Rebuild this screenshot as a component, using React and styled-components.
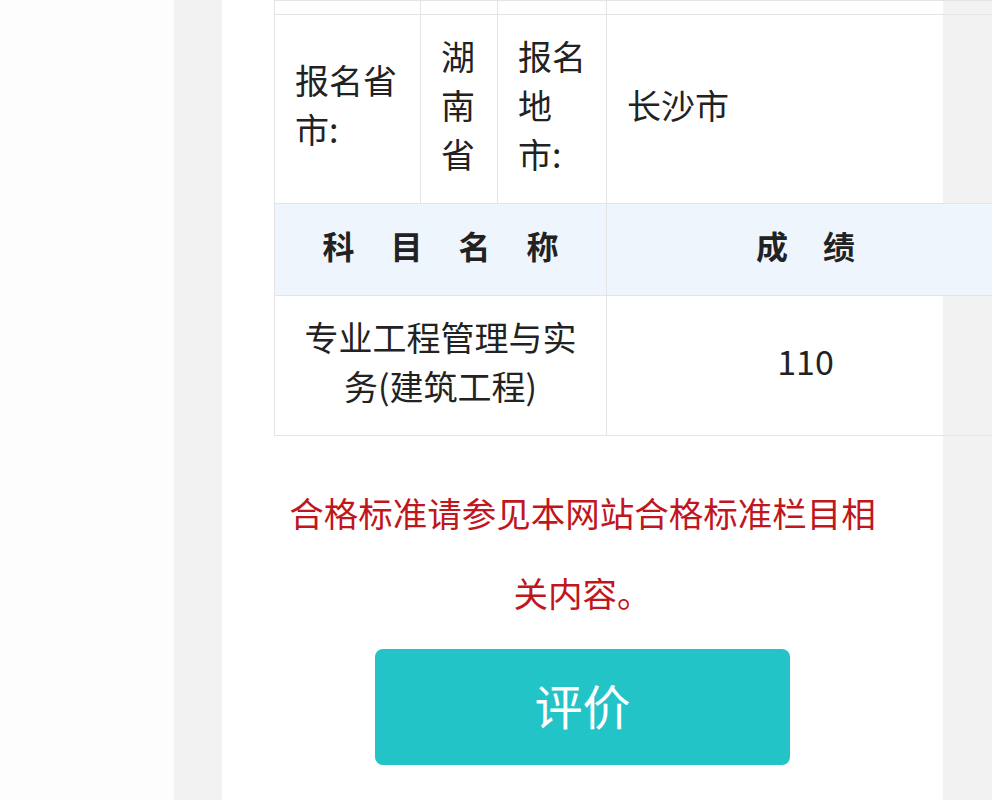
import styled, { createGlobalStyle } from 'styled-components';

const GlobalStyle = createGlobalStyle`
  html, body {
    margin: 0;
    padding: 0;
    background: #fdfdfd;
    overflow: hidden;
  }
  body {
    font-family: "Noto Sans CJK SC", "Noto Sans", sans-serif;
  }
`;

const Page = styled.div`
  display: flex;
  width: 100%;
  height: 800px;
  overflow: hidden;
  padding-left: 174px;
  box-sizing: border-box;
`;

const Backdrop = styled.div`
  flex: 1;
  background: #f2f2f2;
  padding-left: 48px;
`;

const Panel = styled.div`
  width: 721px;
  height: 100%;
  background: #fff;
  padding: 0 52px;
  box-sizing: border-box;
`;

const Table = styled.table`
  width: 730px;
  border-collapse: collapse;
  table-layout: fixed;
  color: #222;
  font-size: 34px;
`;

const Cell = styled.td`
  border: 1px solid #e4e4e4;
  padding: 0 20px ${p => (p.$h > 20 ? 10 : 0)}px;
  height: ${p => p.$h}px;
  box-sizing: border-box;
  line-height: 49px;
  text-align: ${p => (p.$center ? 'center' : 'left')};
  vertical-align: middle;
  word-break: break-all;
`;

const HeadCell = styled.th`
  border: 1px solid #e4e4e4;
  background: #eef5fd;
  height: 92px;
  box-sizing: border-box;
  font-size: 32px;
  font-weight: 700;
  color: #222;
  letter-spacing: ${p => p.$gap}px;
  padding: 0 0 10px ${p => p.$gap}px;
  text-align: center;
`;

const Notice = styled.p`
  max-width: 600px;
  margin: 36px auto 17px;
  color: #c0161e;
  font-size: 34.5px;
  line-height: 80px;
  text-align: center;
`;

const RateButton = styled.button`
  display: block;
  width: 415px;
  height: 116px;
  margin: 0 auto;
  padding: 0 0 6px;
  border: none;
  border-radius: 8px;
  background: #22c4c8;
  color: #fff;
  font-family: inherit;
  font-size: 48px;
  cursor: pointer;
`;

export default function App() {
  return (
    <>
      <GlobalStyle />
      <Page>
        <Backdrop>
          <Panel>
            <Table>
              <colgroup>
                <col style={{ width: 146 }} />
                <col style={{ width: 77 }} />
                <col style={{ width: 109 }} />
                <col style={{ width: 398 }} />
              </colgroup>
              <tbody>
                <tr>
                  <Cell $h={14} />
                  <Cell $h={14} />
                  <Cell $h={14} />
                  <Cell $h={14} />
                </tr>
                <tr>
                  <Cell $h={189}>报名省市:</Cell>
                  <Cell $h={189}>湖南省</Cell>
                  <Cell $h={189}>报名地市:</Cell>
                  <Cell $h={189}>长沙市</Cell>
                </tr>
                <tr>
                  <HeadCell colSpan={3} $gap={36}>科目名称</HeadCell>
                  <HeadCell $gap={35}>成绩</HeadCell>
                </tr>
                <tr>
                  <Cell $h={140} colSpan={3} $center>
                    专业工程管理与实务(建筑工程)
                  </Cell>
                  <Cell $h={140} $center>110</Cell>
                </tr>
              </tbody>
            </Table>
            <Notice>合格标准请参见本网站合格标准栏目相关内容。</Notice>
            <RateButton>评价</RateButton>
          </Panel>
        </Backdrop>
      </Page>
    </>
  );
}
